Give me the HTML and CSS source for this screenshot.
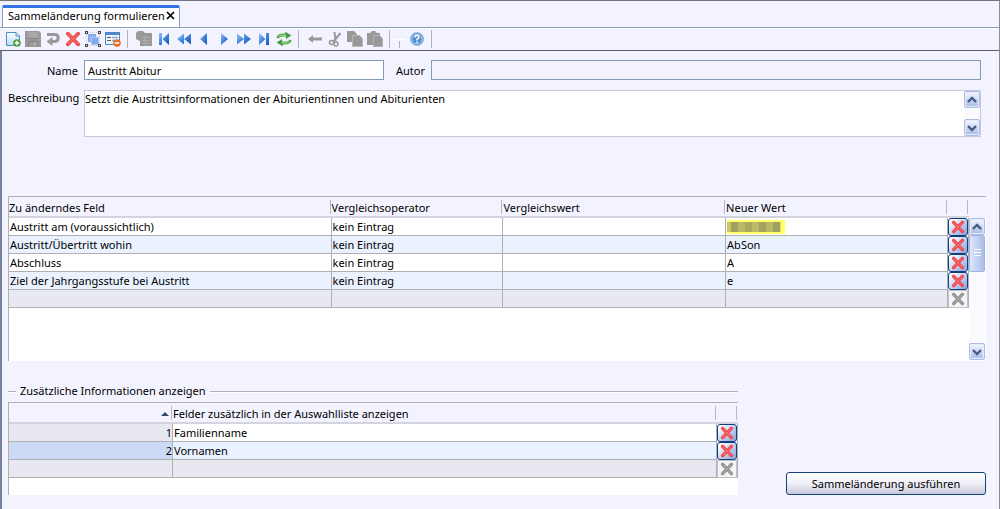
FILE: index.html
```html
<!DOCTYPE html>
<html lang="de">
<head>
<meta charset="utf-8">
<title>Sammeländerung formulieren</title>
<link rel="stylesheet" href="styles.css">
</head>
<body>
<svg class="defs" aria-hidden="true">
  <defs>
    <linearGradient id="blue" x1="0" y1="0" x2="1" y2="1"><stop offset="0" stop-color="#9cc4f2"/><stop offset=".5" stop-color="#3f86de"/><stop offset="1" stop-color="#1c50b4"/></linearGradient>
    <linearGradient id="page" x1="0" y1="0" x2="0" y2="1"><stop offset="0" stop-color="#ffffff"/><stop offset="1" stop-color="#b4daf6"/></linearGradient>
    <symbol id="cross" viewBox="0 0 14 14"><path d="M2.6 2.4L11.4 11.6M11.4 2.4L2.6 11.6" fill="none" stroke="currentColor" stroke-width="3.4" stroke-linecap="round"/><path d="M3 2.8L11 11.2M11 2.8L3 11.2" fill="none" stroke="#fff" stroke-opacity=".2" stroke-width="1"/></symbol>
    <symbol id="up" viewBox="0 0 10 8"><path d="M1 6L5 2L9 6" fill="none" stroke="#425c88" stroke-width="2.4"/></symbol>
    <symbol id="down" viewBox="0 0 10 8"><path d="M1 2L5 6L9 2" fill="none" stroke="#425c88" stroke-width="2.4"/></symbol>
  </defs>
</svg>
<div class="window">
  <div class="tabs" role="tablist">
    <div class="tab" role="tab" aria-selected="true">
      <span>Sammeländerung formulieren</span>
      <button class="tab-close" aria-label="Schließen"><svg viewBox="0 0 9 9"><path d="M1 1L8 8M8 1L1 8" stroke="#000" stroke-width="1.7"/></svg></button>
    </div>
  </div>
  <div class="toolbar" role="toolbar">
    <button aria-label="Neu"><svg viewBox="0 0 16 16"><path d="M1.5 1.5H11L14.5 5V14.5H1.5Z" fill="url(#page)" stroke="#4a90c8"/><path d="M11 1.5V5H14.5" fill="#d8ecfa" stroke="#4a90c8"/><circle cx="12" cy="12" r="3.8" fill="#4da03c"/><path d="M12 9.8V14.2M9.8 12H14.2" stroke="#fff" stroke-width="1.4"/></svg></button>
    <button aria-label="Speichern" disabled><svg viewBox="0 0 16 16"><path d="M0 0H14L16 2V16H0Z" fill="#9a9a9a"/><path d="M3 1H13V7H3Z" fill="#a8a8a8"/><path d="M3 7.5H13M3.5 15V10.5H12.5V15" fill="none" stroke="#858585"/><path d="M10 11.5V14.5" stroke="#c0c0c0" stroke-width="1.5"/></svg></button>
    <button aria-label="Rückgängig" disabled><svg viewBox="0 0 16 16"><path d="M2 3.5H9.5Q13.2 3.5 13.2 7T9.5 10.5H7" fill="none" stroke="#999" stroke-width="3"/><path d="M7.5 6V15L1.5 10.5Z" fill="#999"/></svg></button>
    <button aria-label="Löschen" class="red"><svg viewBox="0 0 14 14"><use href="#cross"/></svg></button>
    <button aria-label="Auswahl"><svg viewBox="0 0 16 16"><path d="M1.5 3V13M3 1.5H13M14.5 3V13M3 14.5H13" stroke="#c8cbd6" stroke-dasharray="1 1" fill="none"/><path d="M3.5 3.5H10.5V10.5H3.5Z" fill="#8fb4ee" stroke="#7ba2e2"/><path d="M6.5 6.5H13.5V13.5H6.5Z" fill="#82a9ec" stroke="#a8c4f4"/><path d="M0 0H3V3H0ZM13 0H16V3H13ZM0 13H3V16H0ZM13 13H16V16H13Z" fill="#444"/><path d="M1 1H2V2H1ZM14 1H15V2H14ZM1 14H2V15H1ZM14 14H15V15H14Z" fill="#fff"/></svg></button>
    <button aria-label="Formular"><svg viewBox="0 0 16 16"><path d="M.5 1.5H14.5V13.5H.5Z" fill="#f2f8ff" stroke="#5688c0"/><path d="M0 1H15V4H0Z" fill="#4f88cc"/><path d="M2 6.5H6M2 9.5H6" stroke="#555"/><path d="M7 6.5H13M7 9.5H11" stroke="#7cace0" stroke-width="1.5"/><circle cx="12" cy="12" r="3.8" fill="#e8702a"/><path d="M9.8 12H14.2" stroke="#fff" stroke-width="1.5"/></svg></button>
    <i class="sep"></i>
    <button aria-label="Liste" disabled><svg viewBox="0 0 16 16"><path d="M2 0H7L9 2H16V15H4V10L0 8V2Z" fill="#999"/><path d="M6 6.5H14M6 9.5H14M6 12.5H14M9 5V14" stroke="#b0b0b0" stroke-width=".8"/></svg></button>
    <button aria-label="Erster"><svg viewBox="0 0 16 16"><path d="M3 2H6V14H3ZM13 2V14L6.5 8Z" fill="url(#blue)"/></svg></button>
    <button aria-label="Zurückblättern"><svg viewBox="0 0 16 16"><path d="M8 2.5V13.5L1 8ZM15 2.5V13.5L8 8Z" fill="url(#blue)"/></svg></button>
    <button aria-label="Vorheriger"><svg viewBox="0 0 16 16"><path d="M11 2V14L4 8Z" fill="url(#blue)"/></svg></button>
    <button aria-label="Nächster"><svg viewBox="0 0 16 16"><path d="M5 2V14L12 8Z" fill="url(#blue)"/></svg></button>
    <button aria-label="Vorblättern"><svg viewBox="0 0 16 16"><path d="M1 2.5V13.5L8 8ZM8 2.5V13.5L15 8Z" fill="url(#blue)"/></svg></button>
    <button aria-label="Letzter"><svg viewBox="0 0 16 16"><path d="M3 2V14L9.5 8ZM10 2H13V14H10Z" fill="url(#blue)"/></svg></button>
    <button aria-label="Aktualisieren"><svg viewBox="0 0 16 16"><path d="M1.5 7Q3 3.2 10 4.2M14.5 9Q13 12.8 6 11.8" fill="none" stroke="#58ac50" stroke-width="2.8"/><path d="M9 .5L15.5 4.5L10 8ZM7 15.5L.5 11.5L6 8Z" fill="#4a9e48"/><path d="M3 5.5Q5 3.6 10 4.2M13 10.5Q11 12.4 6 11.8" fill="none" stroke="#a0dc90" stroke-width="1"/></svg></button>
    <i class="sep"></i>
    <button aria-label="Zurück" disabled><svg viewBox="0 0 16 16"><path d="M1 8L6 4V6.5H15V9.5H6V12Z" fill="#999"/></svg></button>
    <button aria-label="Ausschneiden" disabled><svg viewBox="0 0 16 16"><path d="M7.5 1L8.5 10M13.5 2L6.5 10.5" stroke="#999" stroke-width="2" fill="none"/><circle cx="4.5" cy="11.5" r="2" fill="none" stroke="#999" stroke-width="1.6"/><circle cx="9" cy="13" r="2" fill="none" stroke="#999" stroke-width="1.6"/></svg></button>
    <button aria-label="Kopieren" disabled><svg viewBox="0 0 16 16"><path d="M0 0H7L10 3V11H0Z" fill="#999"/><path d="M5.5 4.5H12.5L15.5 7.5V15.5H5.5Z" fill="#999" stroke="#b8b8b8"/></svg></button>
    <button aria-label="Einfügen" disabled><svg viewBox="0 0 16 16"><path d="M0 2H3L5 0H8L10 2H13V14H0Z" fill="#999"/><path d="M6.5 4.5H12.5L15.5 7.5V15.5H6.5Z" fill="#999" stroke="#b0b0b0"/></svg></button>
    <i class="sep"></i>
    <i class="stub"></i>
    <button aria-label="Hilfe"><svg viewBox="0 0 16 16"><circle cx="8" cy="8" r="6.5" fill="#4a8cd0" stroke="#a5bedf"/><circle cx="8" cy="8" r="5" fill="none" stroke="#d8e8f8" stroke-width=".8"/><path d="M6 6.5Q6 4.5 8 4.5T10 6.3Q10 7.4 8 8.2V9.5M8 10.5V12" fill="none" stroke="#fff" stroke-width="1.5"/></svg></button>
    <i class="sep"></i>
  </div>
  <main class="content">
    <form class="form">
      <label for="name">Name</label>
      <input id="name" class="field" type="text" value="Austritt Abitur">
      <label for="autor">Autor</label>
      <input id="autor" class="field readonly" type="text" readonly>
      <label for="desc" class="top">Beschreibung</label>
      <div class="memo">
        <textarea id="desc">Setzt die Austrittsinformationen der Abiturientinnen und Abiturienten</textarea>
        <div class="scroll">
          <button type="button" aria-label="Nach oben"><svg><use href="#up"/></svg></button>
          <button type="button" class="end" aria-label="Nach unten"><svg><use href="#down"/></svg></button>
        </div>
      </div>
    </form>

    <section class="grid main-grid">
      <table>
        <colgroup><col class="c-field"><col class="c-op"><col class="c-cmp"><col><col class="c-del"></colgroup>
        <thead><tr><th>Zu änderndes Feld</th><th>Vergleichsoperator</th><th>Vergleichswert</th><th>Neuer Wert</th><th></th></tr></thead>
        <tbody>
          <tr><td>Austritt am (voraussichtlich)</td><td>kein Eintrag</td><td></td><td><span class="mark"><span class="pixels"></span></span></td><td class="act"><button class="del" aria-label="Zeile löschen"><svg><use href="#cross"/></svg></button></td></tr>
          <tr class="alt"><td>Austritt/Übertritt wohin</td><td>kein Eintrag</td><td></td><td>AbSon</td><td class="act"><button class="del" aria-label="Zeile löschen"><svg><use href="#cross"/></svg></button></td></tr>
          <tr><td>Abschluss</td><td>kein Eintrag</td><td></td><td>A</td><td class="act"><button class="del" aria-label="Zeile löschen"><svg><use href="#cross"/></svg></button></td></tr>
          <tr class="alt"><td>Ziel der Jahrgangsstufe bei Austritt</td><td>kein Eintrag</td><td></td><td>e</td><td class="act"><button class="del" aria-label="Zeile löschen"><svg><use href="#cross"/></svg></button></td></tr>
          <tr class="empty"><td></td><td></td><td></td><td></td><td class="act"><button class="del" disabled aria-label="Zeile löschen"><svg><use href="#cross"/></svg></button></td></tr>
        </tbody>
      </table>
      <div class="side">
        <div class="scroll">
          <button aria-label="Nach oben"><svg><use href="#up"/></svg></button>
          <div class="thumb"></div>
          <button class="end" aria-label="Nach unten"><svg><use href="#down"/></svg></button>
        </div>
      </div>
    </section>

    <div class="bottom">
      <section class="extra">
        <h2>Zusätzliche Informationen anzeigen</h2>
        <div class="grid extra-grid">
          <table>
            <colgroup><col class="c-num"><col><col class="c-del"></colgroup>
            <thead><tr><th class="num"><svg class="sort" viewBox="0 0 8 4"><path d="M0 4L4 0L8 4Z" fill="#2c4a72"/></svg></th><th>Felder zusätzlich in der Auswahlliste anzeigen</th><th></th></tr></thead>
            <tbody>
              <tr><td class="num fixed">1</td><td>Familienname</td><td class="act"><button class="del" aria-label="Zeile löschen"><svg><use href="#cross"/></svg></button></td></tr>
              <tr class="alt"><td class="num selected">2</td><td>Vornamen</td><td class="act"><button class="del" aria-label="Zeile löschen"><svg><use href="#cross"/></svg></button></td></tr>
              <tr class="empty"><td></td><td></td><td class="act"><button class="del" disabled aria-label="Zeile löschen"><svg><use href="#cross"/></svg></button></td></tr>
            </tbody>
          </table>
        </div>
      </section>
      <button class="run">Sammeländerung ausführen</button>
    </div>
  </main>
</div>
</body>
</html>
```
FILE: styles.css
```css
* { box-sizing: border-box; }
body {
  margin: 0;
  background: #f3f3ff;
  color: #000;
  font: 11px/16px "Noto Sans", "Open Sans", sans-serif;
}
button, input, textarea { font: inherit; color: inherit; margin: 0; }
button { padding: 0; border: 0; background: none; }
svg { display: block; }
.defs { position: absolute; width: 0; height: 0; }

.window {
  display: flex;
  flex-direction: column;
  min-height: 100vh;
  border-top: 1px solid #74747c;
  border-right: 1px solid #8c8c94;
}

/* Tabs */
.tabs { display: flex; padding: 4px 2px 0; border-bottom: 1px solid #84a0bc; }
.tab {
  display: flex;
  align-items: center;
  gap: 1px;
  height: 22px;
  padding: 0 4px 4px 5px;
  background: #fff;
  border: 1px solid #84a0bc;
  border-top: 3px solid #3474e4;
  border-bottom: 0;
  border-radius: 2px 2px 0 0;
}
.tab-close svg { width: 9px; height: 9px; }

/* Toolbar */
.toolbar {
  display: flex;
  align-items: center;
  gap: 4px;
  height: 23px;
  padding: 0 0 2px 5px;
  border-top: 1px solid #fff;
  border-bottom: 1px solid #606068;
}
.toolbar svg { width: 16px; height: 16px; }
.toolbar .red { color: #f04c4c; }
.sep { width: 1px; height: 18px; margin: 0 4px 0 2px; background: #b0b0b8; }
.stub {
  align-self: flex-end;
  width: 11px;
  height: 9px;
  margin-left: -4px;
  border-top: 1px solid #fff;
  background: linear-gradient(#b0b0b8, #b0b0b8) center bottom / 1px 7px no-repeat;
}

/* Content */
.content {
  flex: 1;
  display: flex;
  flex-direction: column;
  margin-right: 5px;
  padding: 9px 7px 8px 6px;
  border-left: 2px solid #74809c;
  border-right: 1px solid #fff;
}
.form {
  display: grid;
  grid-template-columns: 70px 300px 35px 1fr;
  column-gap: 6px;
  row-gap: 10px;
  padding-right: 5px;
  align-items: center;
}
.form label { text-align: right; white-space: nowrap; padding-top: 2px; }
.form .top { align-self: start; padding-top: 0; }
.field {
  width: 100%;
  height: 20px;
  padding: 0 3px;
  border: 1px solid #7f9db9;
  background: #fff;
  outline: 0;
}
.readonly { background: #f3f3ff; }
.memo { grid-column: 2 / -1; display: flex; height: 47px; border: 1px solid #c8c8d8; background: #fff; }
.memo textarea { flex: 1; min-width: 0; padding: 0; border: 0; resize: none; outline: 0; overflow: hidden; background: #fff; }

.scroll { display: flex; flex-direction: column; width: 16px; background: #fbfbff; }
.scroll button {
  display: grid;
  place-items: center;
  width: 16px;
  height: 17px;
  border: 1px solid #aabce4;
  border-radius: 2px;
  background: linear-gradient(#f4f7ff, #a9bae2);
  box-shadow: inset 0 0 0 1px #e4ecff;
}
.scroll svg { width: 10px; height: 8px; }
.scroll .end { margin-top: auto; }
.thumb {
  height: 37px;
  border: 1px solid #a0b4e0;
  border-radius: 2px;
  background:
    repeating-linear-gradient(#fff 0 1px, transparent 1px 3px) center / 7px 9px no-repeat,
    linear-gradient(90deg, #dce6ff, #a9bde8);
}

/* Grids */
.grid { display: flex; align-items: flex-start; border: 1px solid #b0b0b4; border-width: 1px 0 0 1px; background: #fff; }
.main-grid { height: 165px; margin-top: 59px; }
.extra-grid { height: 93px; }
table { flex: 1; min-width: 0; table-layout: fixed; border-collapse: separate; border-spacing: 0; }
.c-field { width: 33.6%; }
.c-op { width: 17.9%; }
.c-cmp { width: 23.2%; }
.c-num { width: 164px; }
.c-del { width: 21px; }
th {
  height: 21px;
  padding: 2px 0 0;
  font-weight: 400;
  text-align: left;
  white-space: nowrap;
  border-bottom: 2px solid #d4d4de;
  background: linear-gradient(#b8b8c0, #b8b8c0) right 1px top 3px / 1px 14px no-repeat #f3f3ff;
}
td {
  height: 18px;
  padding: 0 1px;
  line-height: 17px;
  white-space: nowrap;
  border-right: 1px solid #b0b0b4;
  border-bottom: 1px solid #b0b0b4;
}
.alt td { background: #eaf1ff; }
.empty td, td.fixed { background: #e8e8f0; }
td.selected { background: #ccdaf6; }
.num { text-align: right; }
td.num { padding-right: 0; }
.sort { width: 8px; height: 4px; margin: 0 4px 0 auto; }
td.act { padding: 0; border-bottom: 0; }
.del {
  display: grid;
  place-items: center;
  width: 100%;
  height: 18px;
  border: 1px solid #123f7c;
  border-radius: 3px;
  background: linear-gradient(135deg, #fff 10%, #b6c8ee 60%, #8aa6dc);
  color: #f44c50;
}
.del svg { width: 14px; height: 14px; }
.del:disabled { border-color: #c0c0c8; border-radius: 0; background: #f4f4f6; color: #949494; }
.side { align-self: stretch; display: flex; width: 17px; padding: 21px 1px 1px 0; background: linear-gradient(#f3f3ff 21px, #fff 21px); }
.side .scroll { flex: 1; }
.mark { display: block; width: 58px; height: 14px; padding: 2px 4px 2px 0; background: #ffff68; }
.pixels { display: block; height: 10px; background: linear-gradient(90deg, #c8c85c 4px, #a0a060 4px 11px, #b8b868 11px 18px, #a8a860 18px 25px, #bcbc68 25px 32px, #a4a460 32px 39px, #b8b868 39px 46px, #a0a060 46px 53px, #dcdc64 53px); }

/* Lower area */
.bottom { flex: 1; display: flex; align-items: flex-start; gap: 48px; margin-top: 22px; }
.extra { flex: 1; }
h2 { display: flex; align-items: center; gap: 4px; margin: 0 0 3px; font-size: 11px; font-weight: 400; line-height: 16px; }
h2::before, h2::after { content: ""; height: 1px; background: #b0b0b4; box-shadow: 0 1px #fff; }
h2::before { width: 8px; }
h2::after { flex: 1; }
.run {
  width: 200px;
  height: 23px;
  margin-top: 89px;
  border: 1px solid #16427c;
  border-radius: 3px;
  background: linear-gradient(#fff, #f0f0f8 50%, #c8c8d8);
}
```
